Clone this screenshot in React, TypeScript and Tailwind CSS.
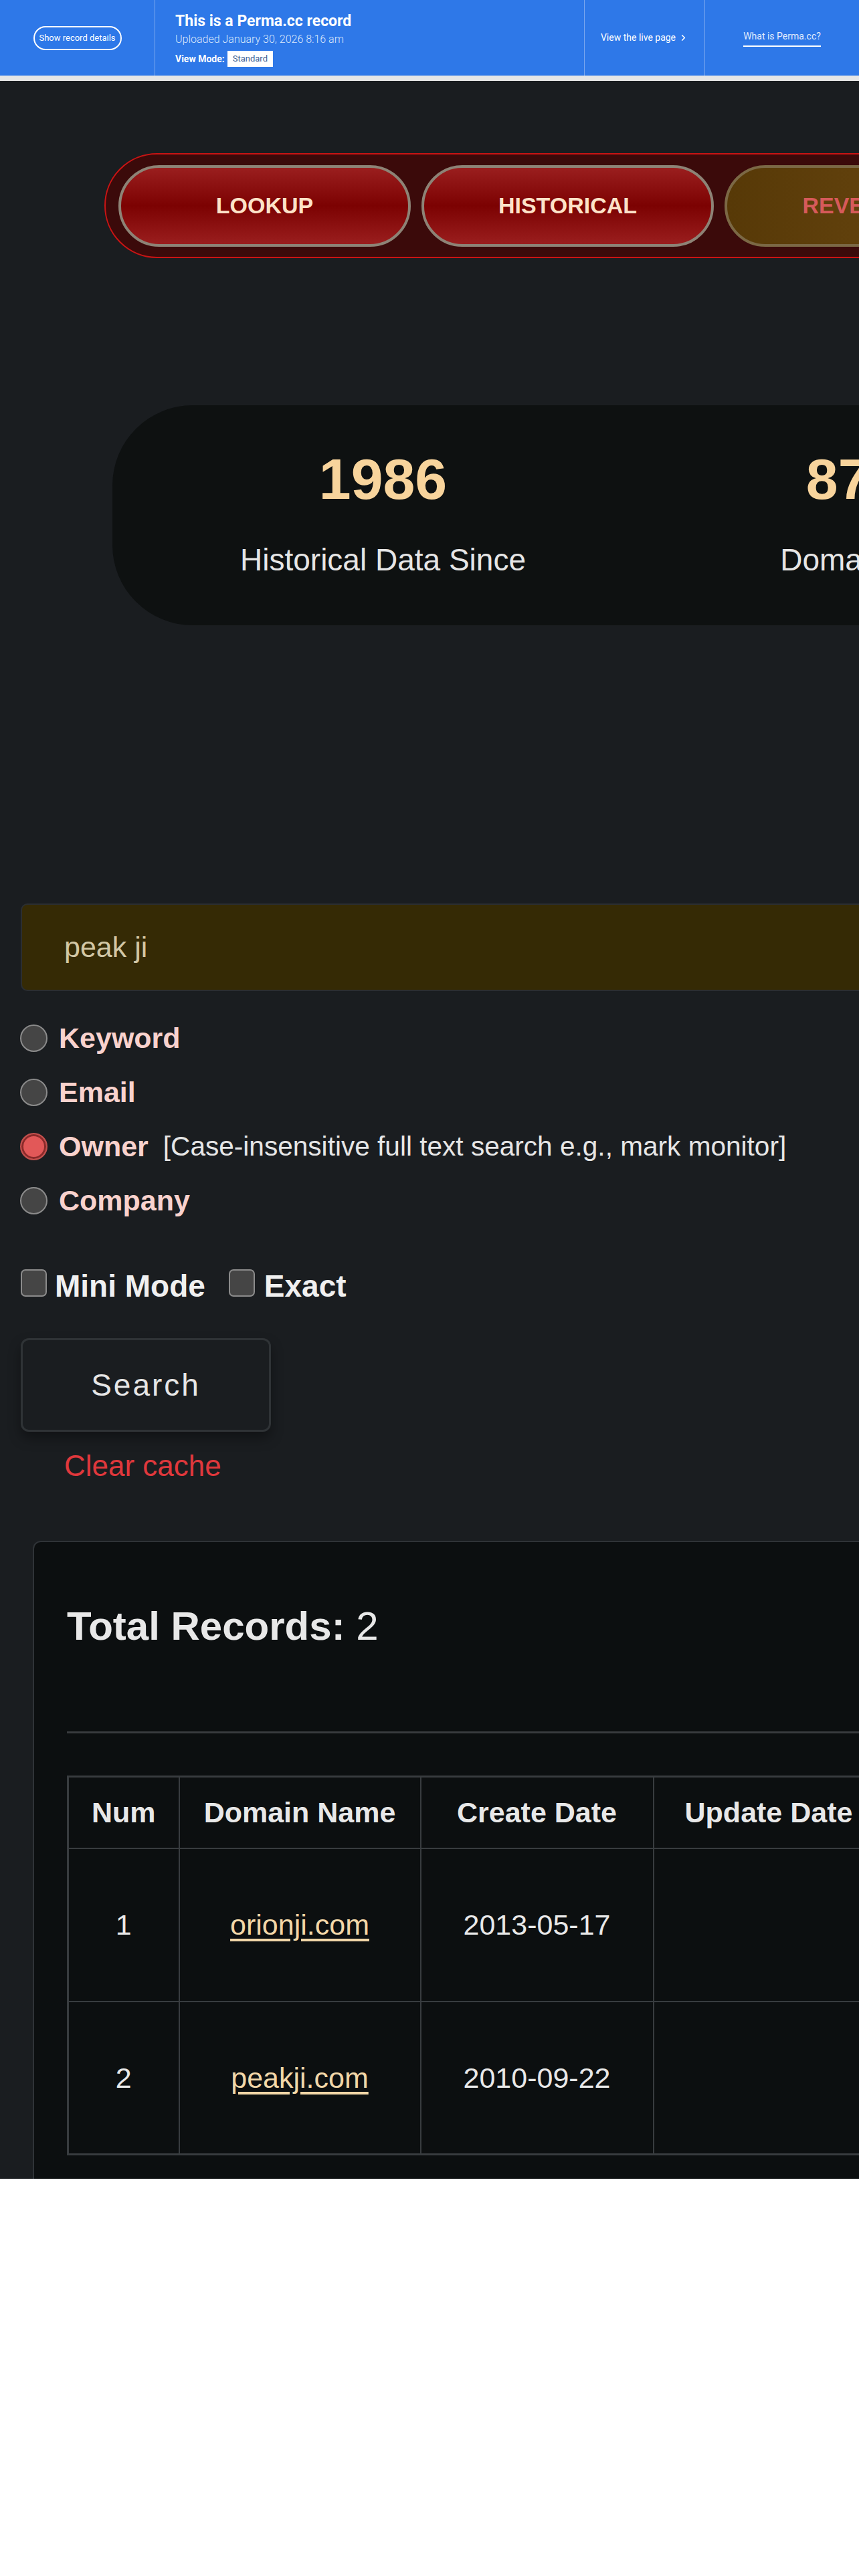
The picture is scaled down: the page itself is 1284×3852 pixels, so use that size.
import React from 'react';
import { ChevronRight } from 'lucide-react';

const navItems = [
  { label: 'LOOKUP', tone: 'red' },
  { label: 'HISTORICAL', tone: 'red' },
  { label: 'REVERSE IP', tone: 'gold' },
  { label: 'DNS', tone: 'red' },
];

const stats = [
  { value: '1986', label: 'Historical Data Since' },
  { value: '870M+', label: 'Domain Records' },
  { value: '2.1B+', label: 'WHOIS Records' },
];

const searchTypes = [
  { id: 'keyword', label: 'Keyword', checked: false },
  { id: 'email', label: 'Email', checked: false },
  { id: 'owner', label: 'Owner', checked: true, hint: '[Case-insensitive full text search e.g., mark monitor]' },
  { id: 'company', label: 'Company', checked: false },
];

const columns = [
  { title: 'Num', width: 166 },
  { title: 'Domain Name', width: 361 },
  { title: 'Create Date', width: 348 },
  { title: 'Update Date', width: 345 },
  { title: 'Expiry Date', width: 345 },
  { title: 'Registrar', width: 420 },
  { title: 'Owner', width: 420 },
];

const records = [
  { num: 1, domain: 'orionji.com', created: '2013-05-17' },
  { num: 2, domain: 'peakji.com', created: '2010-09-22' },
];

const PermaBanner: React.FC = () => (
  <header className="flex h-[113px] bg-[#2e78e8] font-['Roboto',sans-serif] text-white">
    <div className="flex w-[232px] shrink-0 items-center justify-center border-r border-[#7aa7ee]">
      <button className="h-[36px] w-[132px] rounded-full border-2 border-white text-[13px]">
        Show record details
      </button>
    </div>
    <div className="flex w-[642px] shrink-0 flex-col border-r border-[#7aa7ee] pl-[30px] pt-[20px]">
      <h1 className="text-[23px] font-bold leading-none">This is a Perma.cc record</h1>
      <p className="mt-[8px] text-[16px] font-light leading-none text-[#dce8fb]">
        Uploaded January 30, 2026 8:16 am
      </p>
      <div className="mt-[9px] flex items-center gap-[4px]">
        <span className="text-[14px] font-bold">View Mode:</span>
        <span className="flex h-[24px] items-center bg-white px-[8px] text-[13px] text-[#3d5f95]">Standard</span>
      </div>
    </div>
    <div className="flex w-[180px] shrink-0 items-center justify-center gap-[4px] border-r border-[#7aa7ee] text-[14px]">
      View the live page
      <ChevronRight size={15} strokeWidth={2.5} />
    </div>
    <div className="flex flex-1 items-center justify-center">
      <span className="border-b-2 border-white pb-[3px] text-[14px] text-[#e2ecfc]">What is Perma.cc?</span>
    </div>
  </header>
);

export default function App() {
  return (
    <div className="w-full overflow-hidden bg-white">
      <PermaBanner />
      <div className="h-[8px] bg-[#e6e6e6]" />

      <main className="bg-[#1a1d20] pt-[108px] font-['Liberation_Sans',Arial,sans-serif]">
        {/* top menu */}
        <nav className="ml-[156px] flex h-[157px] w-[2200px] items-center gap-[16px] rounded-full border-2 border-[#c91414] bg-[#3b0a0a] pl-[19px]">
          {navItems.map((item) => (
            <button
              key={item.label}
              className={
                item.tone === 'gold'
                  ? 'h-[122px] w-[437px] shrink-0 rounded-full border-4 border-[#7b6845] bg-[linear-gradient(90deg,#573907,#6c4912)] text-[34px] font-bold text-[#d65a5a]'
                  : 'h-[122px] w-[437px] shrink-0 rounded-full border-4 border-[#8d8376] bg-[linear-gradient(180deg,#9a1e1e_0%,#7c0202_50%,#9a1e1e_100%)] text-[34px] font-bold text-[#fde2c8]'
              }
            >
              {item.label}
            </button>
          ))}
        </nav>

        {/* stats */}
        <section className="ml-[168px] mt-[220px] flex h-[329px] w-[2400px] rounded-[120px] bg-[#0e1111] pl-[22px] pt-[67px]">
          {stats.map((s) => (
            <div key={s.label} className="w-[765px] shrink-0 text-center">
              <div className="text-[86px] font-bold leading-none text-[#f8d49c]">{s.value}</div>
              <div className="mt-[55px] text-[46px] leading-none text-[#e6e6e6]">{s.label}</div>
            </div>
          ))}
        </section>

        {/* search form */}
        <input
          type="text"
          defaultValue="peak ji"
          className="ml-[31px] mt-[416px] block h-[131px] w-[2400px] rounded-[10px] border-2 border-[#2b2e31] bg-[#352a05] pl-[63px] text-[43px] text-[#d2c7a6] outline-none"
        />

        <div className="ml-[30px] mt-[30px]">
          {searchTypes.map((t) => (
            <label key={t.id} className="flex h-[81px] items-center">
              <span
                className={
                  t.checked
                    ? 'h-[41px] w-[41px] shrink-0 rounded-full border-2 border-[#c0504d] bg-[#e25858] shadow-[inset_0_0_0_3px_#8a2a2a]'
                    : 'h-[41px] w-[41px] shrink-0 rounded-full border-2 border-[#8b8b8b] bg-[#454545]'
                }
              />
              <span className="ml-[17px] text-[43px] font-bold leading-none text-[#f9d2cd]">{t.label}</span>
              {t.hint && <span className="ml-[22px] text-[40.6px] leading-none text-[#e6e6e6]">{t.hint}</span>}
            </label>
          ))}
        </div>

        <div className="ml-[31px] mt-[62px] flex items-start">
          <span className="h-[41px] w-[39px] shrink-0 rounded-[7px] border-2 border-[#8b8b8b] bg-[#454545]" />
          <span className="ml-[12px] mt-[2px] text-[46px] font-bold leading-none text-[#f0f0f0]">Mini Mode</span>
          <span className="ml-[35px] h-[41px] w-[39px] shrink-0 rounded-[7px] border-2 border-[#8b8b8b] bg-[#454545]" />
          <span className="ml-[14px] mt-[2px] text-[46px] font-bold leading-none text-[#f0f0f0]">Exact</span>
        </div>

        <button className="ml-[31px] mt-[55px] block h-[140px] w-[374px] rounded-[12px] border-[3px] border-[#2f3336] bg-[#1a1d20] text-[46px] tracking-[3px] text-[#e6e6e6] shadow-[0_10px_18px_rgba(0,0,0,0.35)]">
          Search
        </button>

        <div className="ml-[96px] mt-[29px] text-[44px] leading-none text-[#e0383c]">Clear cache</div>

        {/* results */}
        <section className="ml-[49px] mt-[90px] w-[2700px] rounded-t-[12px] border-2 border-b-0 border-[#2f3337] bg-[#0c0f10] pb-[35px] pl-[49px] pt-[96px]">
          <h2 className="text-[60px] leading-none text-[#e8e8e8]">
            <span className="font-bold">Total Records:</span> 2
          </h2>
          <div className="mt-[127px] h-[3px] bg-[#383b3e]" />

          <table className="mt-[63px] table-fixed border-collapse border-[3px] border-[#383c3f] text-[43px] text-[#e8e8e8]">
            <colgroup>
              {columns.map((c) => (
                <col key={c.title} style={{ width: c.width }} />
              ))}
            </colgroup>
            <thead>
              <tr className="h-[107px]">
                {columns.map((c) => (
                  <th key={c.title} className="border-2 border-[#383c3f] font-bold">
                    {c.title}
                  </th>
                ))}
              </tr>
            </thead>
            <tbody>
              {records.map((r) => (
                <tr key={r.domain} className="h-[229px]">
                  <td className="border-2 border-[#383c3f] text-center">{r.num}</td>
                  <td className="border-2 border-[#383c3f] text-center">
                    <a className="text-[#f2d7a8] underline underline-offset-[6px]">{r.domain}</a>
                  </td>
                  <td className="border-2 border-[#383c3f] text-center">{r.created}</td>
                  <td className="border-2 border-[#383c3f]" />
                  <td className="border-2 border-[#383c3f]" />
                  <td className="border-2 border-[#383c3f]" />
                  <td className="border-2 border-[#383c3f]" />
                </tr>
              ))}
            </tbody>
          </table>
        </section>
      </main>
    </div>
  );
}
